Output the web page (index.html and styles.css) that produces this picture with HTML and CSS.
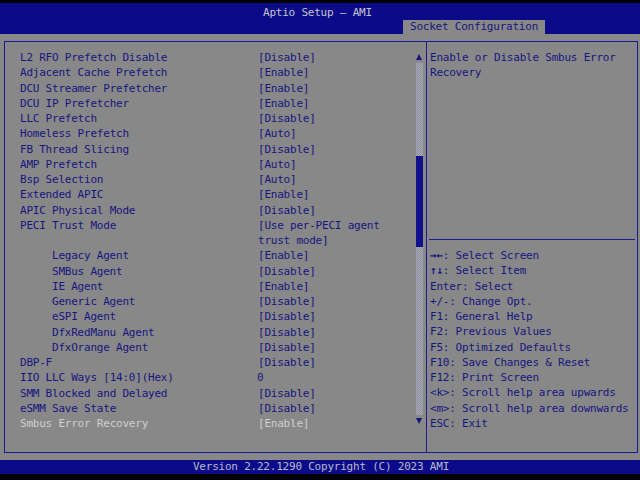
FILE: index.html
```html
<!DOCTYPE html>
<html>
<head>
<meta charset="utf-8">
<link rel="stylesheet" href="styles.css">
</head>
<body>
<div class="screen">
  <div class="topbar"></div>
  <header class="header">
    <div class="title">Aptio Setup – AMI</div>
    <div class="tabs"><span class="tab">Socket Configuration</span></div>
  </header>
  <main class="main">
    <div class="frame">
      <section class="left">
        <div class="list">
          <div class="row"><span>L2 RFO Prefetch Disable</span><span>[Disable]</span></div>
          <div class="row"><span>Adjacent Cache Prefetch</span><span>[Enable]</span></div>
          <div class="row"><span>DCU Streamer Prefetcher</span><span>[Enable]</span></div>
          <div class="row"><span>DCU IP Prefetcher</span><span>[Enable]</span></div>
          <div class="row"><span>LLC Prefetch</span><span>[Disable]</span></div>
          <div class="row"><span>Homeless Prefetch</span><span>[Auto]</span></div>
          <div class="row"><span>FB Thread Slicing</span><span>[Disable]</span></div>
          <div class="row"><span>AMP Prefetch</span><span>[Auto]</span></div>
          <div class="row"><span>Bsp Selection</span><span>[Auto]</span></div>
          <div class="row"><span>Extended APIC</span><span>[Enable]</span></div>
          <div class="row"><span>APIC Physical Mode</span><span>[Disable]</span></div>
          <div class="row"><span>PECI Trust Mode</span><span>[Use per-PECI agent<br>trust mode]</span></div>
          <div class="row sub"><span>Legacy Agent</span><span>[Enable]</span></div>
          <div class="row sub"><span>SMBus Agent</span><span>[Disable]</span></div>
          <div class="row sub"><span>IE Agent</span><span>[Enable]</span></div>
          <div class="row sub"><span>Generic Agent</span><span>[Disable]</span></div>
          <div class="row sub"><span>eSPI Agent</span><span>[Disable]</span></div>
          <div class="row sub"><span>DfxRedManu Agent</span><span>[Disable]</span></div>
          <div class="row sub"><span>DfxOrange Agent</span><span>[Disable]</span></div>
          <div class="row"><span>DBP-F</span><span>[Disable]</span></div>
          <div class="row"><span>IIO LLC Ways [14:0](Hex)</span><span class="num">0</span></div>
          <div class="row"><span>SMM Blocked and Delayed</span><span>[Disable]</span></div>
          <div class="row"><span>eSMM Save State</span><span>[Disable]</span></div>
          <div class="row selected"><span>Smbus Error Recovery</span><span>[Enable]</span></div>
        </div>
        <div class="scroll">
          <div class="arrow up"></div>
          <div class="track">
            <div class="thumb"></div>
          </div>
          <div class="arrow down"></div>
        </div>
      </section>
      <aside class="right">
        <div class="help">Enable or Disable Smbus Error<br>Recovery</div>
        <div class="sep"></div>
        <div class="keys">
          <div><span class="ar">→←</span>: Select Screen</div>
          <div><span class="ar">↑↓</span>: Select Item</div>
          <div>Enter: Select</div>
          <div>+/-: Change Opt.</div>
          <div>F1: General Help</div>
          <div>F2: Previous Values</div>
          <div>F5: Optimized Defaults</div>
          <div>F10: Save Changes &amp; Reset</div>
          <div>F12: Print Screen</div>
          <div>&lt;k&gt;: Scroll help area upwards</div>
          <div>&lt;m&gt;: Scroll help area downwards</div>
          <div>ESC: Exit</div>
        </div>
      </aside>
    </div>
  </main>
  <footer class="footer">Version 2.22.1290 Copyright (C) 2023 AMI</footer>
  <div class="bottombar"></div>
</div>
</body>
</html>
```

FILE: styles.css
```css
* { box-sizing: border-box; }
html, body { margin: 0; padding: 0; background: #000; }
body {
  font-family: "DejaVu Sans Mono", "Liberation Mono", monospace;
  font-size: 11px;
  letter-spacing: -0.22px;
  color: #16167f;
}
.screen {
  width: 640px;
  height: 480px;
  background: #000;
  display: flex;
  flex-direction: column;
  overflow: hidden;
}
.topbar { height: 3px; flex: none; }
.header {
  height: 31px;
  flex: none;
  background: #0b0b8a;
  display: flex;
  flex-direction: column;
}
.title {
  height: 17px;
  padding: 2px 0 0 263px;
  line-height: 15px;
  color: #c4c4cc;
  white-space: pre;
}
.tabs {
  height: 14px;
  display: flex;
  padding-left: 403px;
}
.tab {
  background: #888888;
  color: #16167e;
  padding: 0 6px 0 7px;
  line-height: 14px;
  white-space: nowrap;
  min-width: 142px;
}
.main {
  height: 426px;
  flex: none;
  background: #888888;
  padding: 7px 2px 7px 4px;
}
.frame {
  height: 412px;
  border: 1px solid #1c1c92;
  display: flex;
}
.left {
  width: 422px;
  border-right: 1px solid #1c1c92;
  display: flex;
}
.list {
  flex: 1;
  padding: 8.2px 0 0 15px;
  line-height: 15.25px;
  white-space: nowrap;
}
.row {
  display: grid;
  grid-template-columns: 238px 1fr;
}
.row.sub > span:first-child { padding-left: 32px; }
.row .num { margin-left: -1px; }
.row.selected { color: #cfcfcf; }
.scroll {
  width: 7px;
  margin-right: 3px;
  display: flex;
  flex-direction: column;
  padding-top: 12px;
}
.arrow {
  width: 0;
  height: 0;
  border-left: 3.5px solid transparent;
  border-right: 3.5px solid transparent;
}
.arrow.up { border-bottom: 6px solid #14147e; }
.arrow.down { border-top: 6px solid #14147e; }
.track {
  height: 352px;
  margin: 3px 0 3px 0;
  background-color: #9c9cac;
  background-image: repeating-conic-gradient(#8e8e9c 0 25%, #a8a8b6 0 50%);
  background-size: 2px 2px;
  display: flex;
  flex-direction: column;
  padding-top: 93px;
}
.thumb {
  height: 91px;
  background: #10108a;
}
.right {
  flex: 1;
  display: flex;
  flex-direction: column;
  line-height: 15.25px;
  white-space: nowrap;
}
.help {
  height: 197px;
  padding: 8.2px 0 0 3px;
}
.sep {
  height: 1px;
  margin: 0 2px 0 2px;
  background: #1c1c92;
}
.keys {
  padding: 8.2px 0 0 3px;
}
.ar { font-weight: bold; }
.footer {
  height: 14px;
  flex: none;
  background: #0b0b8a;
  color: #b8b8c8;
  text-align: center;
  line-height: 14px;
  padding-left: 2px;
}
.bottombar { flex: 1; }
```
